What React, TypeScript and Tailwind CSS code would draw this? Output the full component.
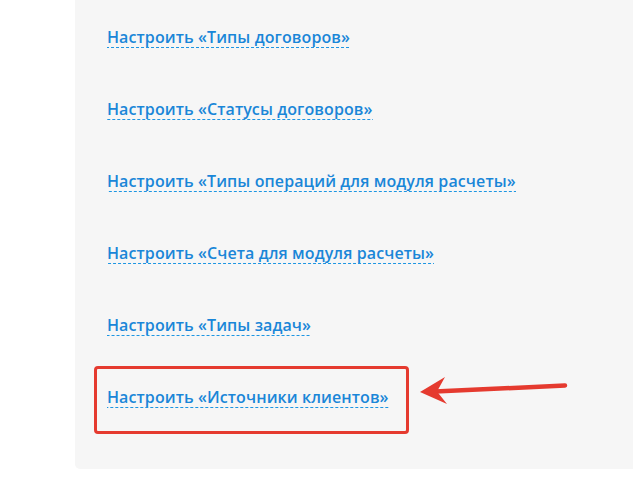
const items = [
  "Настроить «Типы договоров»",
  "Настроить «Статусы договоров»",
  "Настроить «Типы операций для модуля расчеты»",
  "Настроить «Счета для модуля расчеты»",
  "Настроить «Типы задач»",
  "Настроить «Источники клиентов»",
];

export default function App() {
  return (
    <div className="relative h-[480px] w-[633px] overflow-hidden bg-white font-['Open_Sans',sans-serif]">
      <div className="ml-[75px] h-[469px] rounded-bl-[5px] bg-[#f6f6f6] pl-[32px] pt-[27px]">
        <div className="flex flex-col items-start gap-[51px]">
          {items.map((label) => (
            <a
              key={label}
              href="#"
              className="inline-block bg-[linear-gradient(to_right,#1d96e3_60%,transparent_60%)] bg-[length:5px_1px] bg-bottom bg-repeat-x pb-px text-[16px] font-semibold leading-[20px] tracking-[0.1px] text-[#1a86d8]"
            >
              {label}
            </a>
          ))}
        </div>
      </div>

      {/* highlight on the last link */}
      <div className="absolute left-[94px] top-[366px] h-[68px] w-[315px] rounded-[4px] border-[3px] border-[#e53a2f]" />

      <svg
        className="absolute left-[415px] top-[370px]"
        width="160"
        height="40"
        viewBox="0 0 160 40"
      >
        <line x1="20" y1="21.5" x2="150" y2="15.5" stroke="#e53a2f" strokeWidth="4.5" strokeLinecap="round" />
        <path d="M5 22 L30 7 L22 21.5 L32 34 Z" fill="#e53a2f" />
      </svg>
    </div>
  );
}
